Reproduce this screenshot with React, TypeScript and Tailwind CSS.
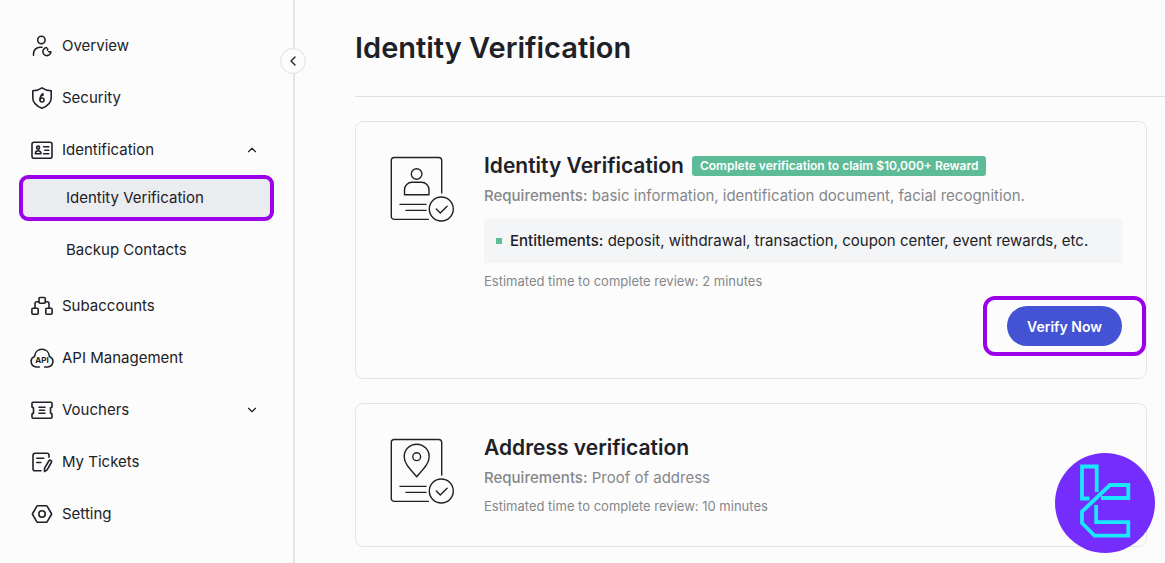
import type { ReactNode } from "react";
import { ChevronDown, ChevronLeft, ChevronUp } from "lucide-react";

const NavIcon = ({ children }: { children: ReactNode }) => (
  <svg
    viewBox="0 0 24 24"
    fill="none"
    stroke="currentColor"
    strokeWidth="1.6"
    strokeLinecap="round"
    strokeLinejoin="round"
    aria-hidden="true"
    className="h-6 w-6 shrink-0"
  >
    {children}
  </svg>
);

const OverviewIcon = () => (
  <NavIcon>
    <circle cx="11.4" cy="6" r="3.7" />
    <path d="M3.5 21.3v-1.600a6.500 6.500 0 0 1 6.500-6.400h2" />
    <path d="M16.600 13.600a4 4 0 1 0 4.300 4.200h-2.200" />
    <path d="M17.600 14.800v1.500" />
  </NavIcon>
);

const SecurityIcon = () => (
  <NavIcon>
    <path d="M12 1.800c2.600 1.900 5.500 2.700 9.200 2.900v7c0 5-3.600 8.300-9.200 10.500-5.600-2.200-9.200-5.500-9.200-10.500v-7c3.700-.2 6.600-1 9.200-2.900z" />
    <circle cx="12" cy="14" r="2" />
    <path d="M10 13.600c.2-2.900.9-4.600 2.900-5.900v1.800" />
  </NavIcon>
);

const IdentificationIcon = () => (
  <NavIcon>
    <rect x="2" y="4.300" width="20" height="16" rx="2" />
    <circle cx="8.100" cy="9.600" r="1.500" />
    <path d="M5.400 15.700c0-1.900 1-2.900 2.700-2.900s2.800 1 2.800 2.900z" />
    <path d="M13.600 8.800h5.200M14.800 12.300h4M13.600 15.700h5.200" />
  </NavIcon>
);

const SubaccountsIcon = () => (
  <NavIcon>
    <rect x="9" y="3.500" width="6.300" height="5.800" rx="1" />
    <rect x="1.900" y="14.300" width="6.300" height="6" rx="1" />
    <rect x="15.800" y="14.300" width="6.300" height="6" rx="1" />
    <path d="M5 14.300V9.700a2 2 0 0 1 2-2h2M19 14.300V9.700a2 2 0 0 0-2-2h-1.700" />
  </NavIcon>
);

const ApiIcon = () => (
  <NavIcon>
    <path d="M9.300 21H6.400A5.500 5.500 0 0 1 4.600 10.400C5 6.300 8 3.300 12 3.300s7 3 7.400 7.100A5.500 5.500 0 0 1 17.600 21h-2.900" />
    <text
      x="12"
      y="17"
      textAnchor="middle"
      fontSize="8"
      fontWeight="700"
      fill="currentColor"
      stroke="none"
    >
      API
    </text>
  </NavIcon>
);

const VouchersIcon = () => (
  <NavIcon>
    <path d="M3 4.300h18a1 1 0 0 1 1 1v3.700l-1.500 1v5l1.500 1v3.300a1 1 0 0 1-1 1H3a1 1 0 0 1-1-1V16l1.500-1v-5L2 9V5.300a1 1 0 0 1 1-1z" />
    <path d="M9 9.300h6M9.500 12.300h5M9 15.300h6" />
  </NavIcon>
);

const TicketsIcon = () => (
  <NavIcon>
    <path d="M11 20.800H5a2 2 0 0 1-2-2V5.300a2 2 0 0 1 2-2h12a2 2 0 0 1 2 2v2" />
    <path d="M6.800 8.300h7M6.800 12.500h4" />
    <path d="M18.800 11c.5-.8 1.400-1 2.100-.6s.9 1.300.4 2.100l-4.200 7.300-2.600 1.700v-3.200z" />
  </NavIcon>
);

const SettingIcon = () => (
  <NavIcon>
    <path d="M7.800 3.700h8.400a1 1 0 0 1 .9.500l4.300 7.300a1 1 0 0 1 0 1l-4.300 7.300a1 1 0 0 1-.9.500H7.800a1 1 0 0 1-.9-.5l-4.300-7.300a1 1 0 0 1 0-1l4.300-7.300a1 1 0 0 1 .9-.5z" />
    <circle cx="12" cy="12" r="3.200" />
  </NavIcon>
);

const DocumentIcon = ({ children }: { children: ReactNode }) => (
  <svg
    viewBox="0 0 68 68"
    fill="none"
    stroke="currentColor"
    strokeWidth="1.400"
    strokeLinecap="round"
    strokeLinejoin="round"
    aria-hidden="true"
    className="h-[68px] w-[68px] shrink-0"
  >
    <path d="M38.300 65.400H4.300a3 3 0 0 1-3-3V6.500a3 3 0 0 1 3-3h44.400a3 3 0 0 1 3 3V39" />
    <path d="M10 50.400h26M16 56.400h20" />
    <circle cx="51.300" cy="55" r="12" />
    <path d="M46.300 55l4 4 6.800-6.800" />
    {children}
  </svg>
);

const navItemClass =
  "flex h-11 w-full items-center gap-2 rounded-lg px-2.5 text-[15px] hover:bg-gray-100";

interface NavItemProps {
  icon: ReactNode;
  label: string;
}

const NavLink = ({ icon, label }: NavItemProps) => (
  <a href="#" className={navItemClass}>
    {icon}
    {label}
  </a>
);

const NavGroup = ({ icon, label, open }: NavItemProps & { open: boolean }) => (
  <button type="button" aria-expanded={open} className={navItemClass}>
    {icon}
    <span className="flex-1 text-left">{label}</span>
    {open ? (
      <ChevronUp className="mr-1 h-3.5 w-3.5" />
    ) : (
      <ChevronDown className="mr-1 h-3.5 w-3.5" />
    )}
  </button>
);

const Sidebar = () => (
  <aside className="relative w-[295px] shrink-0 border-r-2 border-[#e5e5e6] px-5 pt-6">
    <nav aria-label="Account">
      <ul className="flex flex-col gap-2">
        <li>
          <NavLink icon={<OverviewIcon />} label="Overview" />
        </li>
        <li>
          <NavLink icon={<SecurityIcon />} label="Security" />
        </li>
        <li className="flex flex-col gap-1 pb-1">
          <NavGroup icon={<IdentificationIcon />} label="Identification" open />
          <ul className="flex flex-col gap-2 text-[15px]">
            <li>
              <a
                href="#"
                aria-current="page"
                className="flex h-11 items-center rounded-lg bg-[#ebecf0] pl-[46px] outline-4 -outline-offset-3 outline-[#9b00e8]"
              >
                Identity Verification
              </a>
            </li>
            <li>
              <a href="#" className="flex h-11 items-center rounded-lg pl-[46px] hover:bg-gray-100">
                Backup Contacts
              </a>
            </li>
          </ul>
        </li>
        <li>
          <NavLink icon={<SubaccountsIcon />} label="Subaccounts" />
        </li>
        <li>
          <NavLink icon={<ApiIcon />} label="API Management" />
        </li>
        <li>
          <NavGroup icon={<VouchersIcon />} label="Vouchers" open={false} />
        </li>
        <li>
          <NavLink icon={<TicketsIcon />} label="My Tickets" />
        </li>
        <li>
          <NavLink icon={<SettingIcon />} label="Setting" />
        </li>
      </ul>
    </nav>

    {/* Collapse handle sits on the sidebar border */}
    <button
      type="button"
      aria-label="Collapse sidebar"
      className="absolute -right-[13px] top-12 flex h-[26px] w-[26px] items-center justify-center rounded-full border border-[#e0e0e2] bg-[#fcfcfc]"
    >
      <ChevronLeft className="h-4 w-4" />
    </button>
  </aside>
);

interface VerificationCardProps {
  icon: ReactNode;
  title: string;
  badge?: string;
  requirements: string;
  entitlements?: string;
  minutes: number;
  action?: string;
}

const VerificationCard = ({
  icon,
  title,
  badge,
  requirements,
  entitlements,
  minutes,
  action,
}: VerificationCardProps) => (
  <section className="flex items-start gap-[26px] rounded-lg border border-[#e4e5e7] py-8 pl-[34px] pr-6">
    {icon}
    <div className="min-w-0 flex-1">
      <div className="flex items-center gap-2">
        <h2 className="text-[21px] font-semibold leading-6">{title}</h2>
        {badge && (
          <span className="rounded-[3px] bg-[#5dbb98] px-2 text-[12px] font-semibold leading-5 text-white">
            {badge}
          </span>
        )}
      </div>
      <p className="mt-2 text-[15px] leading-5 text-[#85878b]">
        <span className="font-medium">Requirements:</span> {requirements}
      </p>
      {entitlements && (
        <div className="mt-[13px] flex items-center gap-2 bg-[#f3f5f6] p-3 text-[15px] leading-5">
          <span className="h-1.5 w-1.5 bg-[#5dbb98]" />
          <p>
            <span className="font-medium">Entitlements:</span> {entitlements}
          </p>
        </div>
      )}
      <p className="mt-2.5 text-[13px] leading-4 text-[#85878b]">
        Estimated time to complete review: {minutes} minutes
      </p>
      {action && (
        <div className="mt-[17px] flex justify-end">
          <div className="relative">
            <button
              type="button"
              className="h-10 rounded-full bg-[#4353d3] px-5 text-[14px] font-semibold text-white hover:bg-[#3947bd]"
            >
              {action}
            </button>
            <span className="pointer-events-none absolute -inset-x-6 -inset-y-2.5 rounded-xl border-4 border-[#9b00e8]" />
          </div>
        </div>
      )}
    </div>
  </section>
);

const BrandMark = () => (
  <svg
    viewBox="0 0 100 100"
    fill="none"
    stroke="#19e8ff"
    strokeWidth="3.800"
    aria-hidden="true"
    className="fixed bottom-2.5 right-2.5 h-[100px] w-[100px]"
  >
    <circle cx="50" cy="50" r="50" fill="#742dfd" stroke="none" />
    <path d="M34.500 45.500H27v-32h14.700V39" />
    <path d="M46 45h27.300V32H55L27 58.500V70l12.500 12.700h33.800V69.200H41.200V52" />
  </svg>
);

export default function App() {
  return (
    <div className="flex min-h-screen bg-[#fcfcfc] font-['Inter',sans-serif] text-[#202127]">
      <Sidebar />
      <main className="min-w-0 flex-1 pl-[60px]">
        <header className="flex h-[97px] items-center border-b border-[#e0e1e3]">
          <h1 className="text-[29px] font-semibold leading-9">Identity Verification</h1>
        </header>
        <div className="flex flex-col gap-6 pb-4 pr-[18px] pt-6">
          <VerificationCard
            icon={
              <DocumentIcon>
                <circle cx="26.600" cy="20" r="5.300" />
                <path d="M14.500 40.800v-5a7.500 7.500 0 0 1 7.500-7.500h9.500a7.500 7.500 0 0 1 7.500 7.500v5z" />
              </DocumentIcon>
            }
            title="Identity Verification"
            badge="Complete verification to claim $10,000+ Reward"
            requirements="basic information, identification document, facial recognition."
            entitlements="deposit, withdrawal, transaction, coupon center, event rewards, etc."
            minutes={2}
            action="Verify Now"
          />
          <VerificationCard
            icon={
              <DocumentIcon>
                <path d="M26.700 40.700C19.200 32.200 14.200 27.200 14.200 20.700a12.500 12.500 0 0 1 25 0c0 6.500-5 11.500-12.500 20z" />
                <circle cx="26.700" cy="20.700" r="3.900" />
              </DocumentIcon>
            }
            title="Address verification"
            requirements="Proof of address"
            minutes={10}
          />
        </div>
      </main>
      <BrandMark />
    </div>
  );
}
